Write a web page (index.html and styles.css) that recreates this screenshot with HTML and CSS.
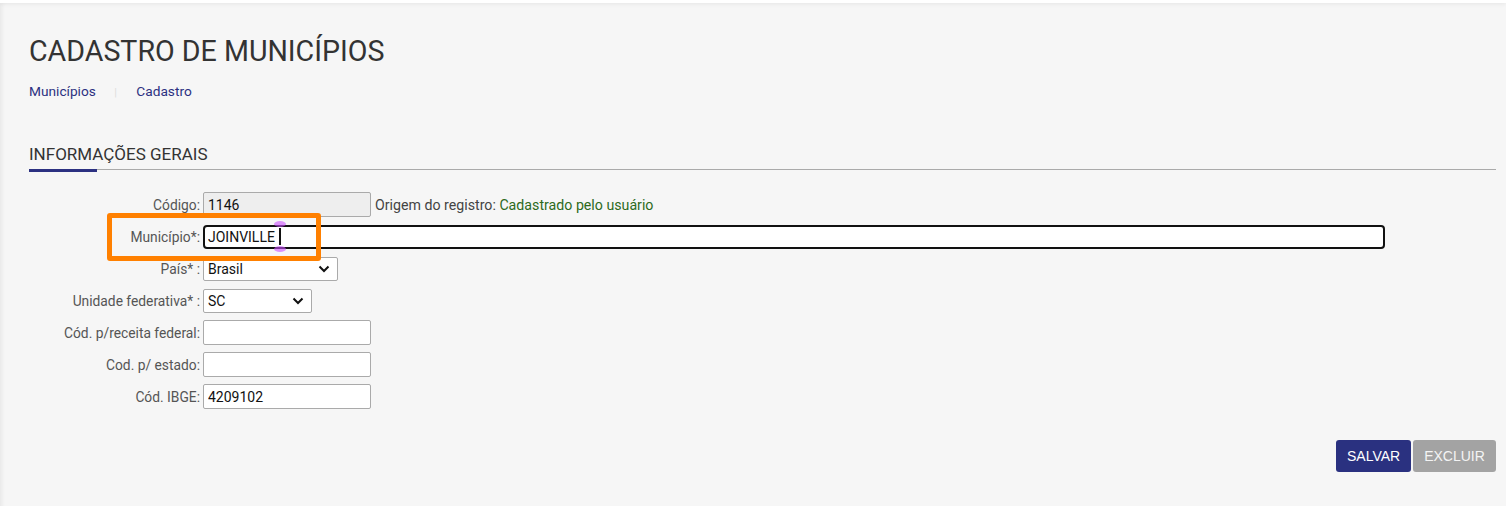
FILE: index.html
```html
<!DOCTYPE html>
<html lang="pt-BR">
  <head>
    <meta charset="utf-8">
    <link rel="stylesheet" href="styles.css">
    <title>Cadastro de municípios</title>
  </head>
  <body>
    <div class="topbar"></div>
    <div class="page">
      <h1>CADASTRO DE MUNICÍPIOS</h1>
      <div class="breadcrumb">
        <a href="#">Municípios</a>
        <span class="sep">|</span>
        <a href="#">Cadastro</a>
      </div>

      <h2 class="section-title">INFORMAÇÕES GERAIS</h2>

      <div class="form">
        <label>Código:</label>
        <div class="field">
          <input class="small readonly" type="text" value="1146" readonly>
          <span class="origem">Origem do registro: <span class="green">Cadastrado pelo usuário</span></span>
        </div>

        <label>Município*:</label>
        <div class="field">
          <input class="wide focus" type="text" value="JOINVILLE">
          <span class="caret"></span>
        </div>

        <label>País* :</label>
        <div class="field">
          <span class="select-wrap">
            <select class="pais">
              <option>Brasil</option>
            </select>
            <svg class="chevron" width="12" height="8" viewBox="0 0 12 8"><path d="M1.5 1.5 L6 6 L10.5 1.5" fill="none" stroke="#111" stroke-width="2"/></svg>
          </span>
        </div>

        <label>Unidade federativa* :</label>
        <div class="field">
          <span class="select-wrap">
            <select class="uf">
              <option>SC</option>
            </select>
            <svg class="chevron" width="12" height="8" viewBox="0 0 12 8"><path d="M1.5 1.5 L6 6 L10.5 1.5" fill="none" stroke="#111" stroke-width="2"/></svg>
          </span>
        </div>

        <label>Cód. p/receita federal:</label>
        <div class="field"><input class="small" type="text"></div>

        <label>Cod. p/ estado:</label>
        <div class="field"><input class="small" type="text"></div>

        <label>Cód. IBGE:</label>
        <div class="field"><input class="small" type="text" value="4209102"></div>
      </div>

      <div class="actions">
        <button class="btn primary">SALVAR</button>
        <button class="btn disabled">EXCLUIR</button>
      </div>

      <!-- marcação laranja do print -->
      <div class="highlight"></div>
    </div>
  </body>
</html>
```

FILE: styles.css
```css
body {
  margin: 0;
  background: #f6f6f6;
  font-family: Roboto, "Liberation Sans", sans-serif;
  color: #333;
}
.topbar {
  height: 3px;
  background: #fff;
  box-shadow: 0 1px 4px rgba(0, 0, 0, 0.08);
}
.page {
  position: relative;
  padding: 1px 10px 40px 29px;
  min-height: 462px;
  box-shadow: inset 4px 0 4px -2px rgba(0, 0, 0, 0.06);
}
h1 {
  font-size: 28.6px;
  font-weight: 400;
  margin: 30px 0 0;
  color: #333;
}
.breadcrumb {
  margin-top: 15px;
  font-size: 13.7px;
}
.breadcrumb a {
  color: #2c3181;
  text-decoration: none;
}
.breadcrumb .sep {
  color: #ddd;
  margin: 0 16px 0 15px;
  font-size: 11px;
}
.section-title {
  margin: 45px 0 0;
  font-size: 17px;
  font-weight: 400;
  color: #333;
  padding-bottom: 5px;
  border-bottom: 1px solid #aaa;
  position: relative;
}
.section-title::after {
  content: "";
  position: absolute;
  left: 0;
  bottom: -3px;
  width: 68px;
  height: 3px;
  background: #2c3181;
}
.form {
  display: grid;
  grid-template-columns: 171px 1fr;
  column-gap: 3px;
  row-gap: 7px;
  margin-top: 22px;
  margin-right: 111px;
  align-items: center;
}
.form label {
  text-align: right;
  font-size: 13.8px;
  color: #555;
}
.field {
  display: flex;
  align-items: center;
  height: 25px;
  position: relative;
}
input, select {
  font-family: Roboto, "Liberation Sans", sans-serif;
  font-size: 14px;
  color: #111;
  box-sizing: border-box;
  height: 25px;
  background: #fff;
  border: 1px solid #aaa;
  border-radius: 2px;
  padding: 0 4px;
  margin: 0;
}
input.small {
  width: 168px;
}
input.readonly {
  background: #eee;
}
input.wide {
  width: 100%;
}
input.focus {
  border: 2px solid #111;
  border-radius: 4px;
  padding: 0 3px;
  height: 24px;
  outline: none;
}
.select-wrap {
  position: relative;
  display: inline-flex;
}
select {
  appearance: none;
  height: 24px;
  padding: 0 4px;
}
select.pais {
  width: 135px;
}
select.uf {
  width: 109px;
}
.chevron {
  position: absolute;
  right: 8px;
  top: 8px;
  pointer-events: none;
}
.origem {
  margin-left: 4px;
  font-size: 14.2px;
  color: #444;
}
.green {
  color: #2d6a1c;
}
.caret {
  position: absolute;
  left: 76px;
  top: 4px;
  width: 2px;
  height: 17px;
  background: #111;
}
.caret::before, .caret::after {
  content: "";
  position: absolute;
  left: -5px;
  width: 12px;
  height: 6px;
  border-radius: 50%;
  background: rgba(204, 80, 255, 0.6);
}
.caret::before {
  top: -7px;
}
.caret::after {
  bottom: -7px;
}
.actions {
  display: flex;
  justify-content: flex-end;
  gap: 2px;
  margin-top: 31px;
}
.btn {
  font-family: "Liberation Sans", Arial, sans-serif;
  font-size: 14px;
  color: #fff;
  border: none;
  border-radius: 3px;
  height: 32px;
  padding: 0 11px;
}
.btn.primary {
  background: #2a3180;
  width: 75px;
}
.btn.disabled {
  background: #a3a3a3;
  color: #f4f4f4;
  width: 83px;
}
.highlight {
  position: absolute;
  left: 107px;
  top: 210px;
  width: 204px;
  height: 38px;
  border: 5px solid #ff8000;
  border-radius: 3px;
}
```
